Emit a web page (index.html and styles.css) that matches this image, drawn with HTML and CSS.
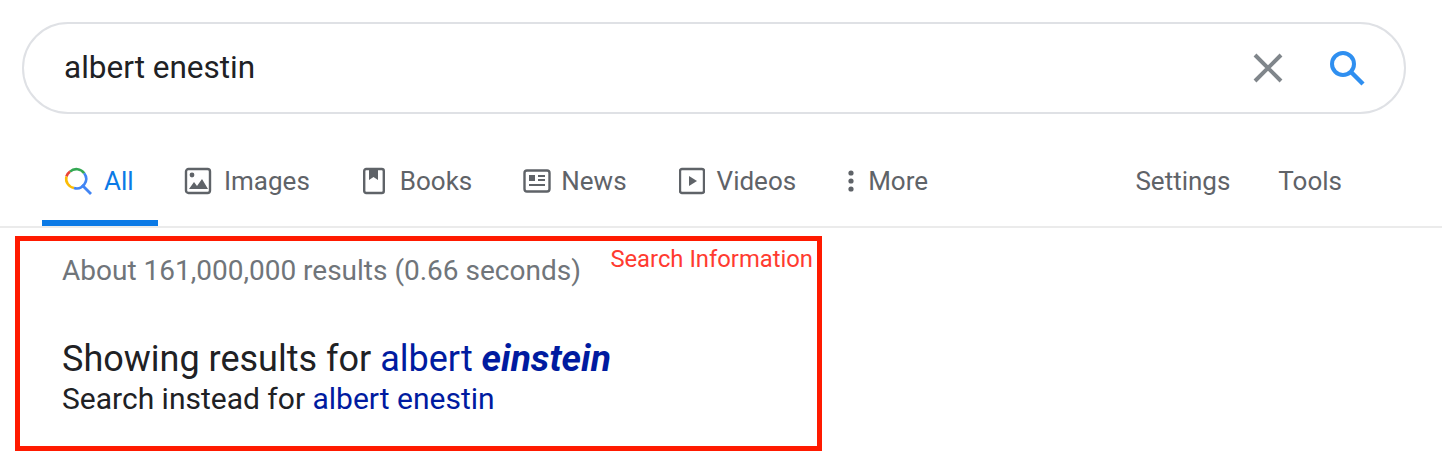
FILE: index.html
```html
<!DOCTYPE html>
<html lang="en">
<head>
    <meta charset="UTF-8">
    <title>albert enestin - Search</title>
    <link rel="stylesheet" href="styles.css">
</head>
<body>

    <!-- Search box -->
    <div class="search-box">
        <span class="search-query">albert enestin</span>
        <svg class="clear-icon" viewBox="0 0 30 30" width="30" height="30">
            <path d="M2 2 L28 28 M28 2 L2 28" stroke="#80868b" stroke-width="4" fill="none"/>
        </svg>
        <svg class="search-icon" viewBox="0 0 36 36" width="36" height="36">
            <circle cx="14" cy="14" r="11" stroke="#2f8ff0" stroke-width="4" fill="none"/>
            <path d="M22 22 L34 34" stroke="#2f8ff0" stroke-width="4.4" fill="none"/>
        </svg>
    </div>

    <!-- Tabs -->
    <div class="tabs">
        <a class="tab tab-active">
            <svg class="tab-icon" viewBox="0 0 28 28" width="28" height="28">
                <path d="M20.2 6.2 A9.5 9.5 0 0 0 6 4.6" stroke="#34a853" stroke-width="2.6" fill="none"/>
                <path d="M6 4.6 A9.5 9.5 0 0 0 2.4 9.5" stroke="#ea4335" stroke-width="2.6" fill="none"/>
                <path d="M2.4 9.5 A9.5 9.5 0 0 0 10 21" stroke="#fbbc05" stroke-width="2.6" fill="none"/>
                <path d="M10 21 A9.5 9.5 0 0 0 20.2 6.2" stroke="#4285f4" stroke-width="2.6" fill="none"/>
                <path d="M18 18 L27 27" stroke="#4285f4" stroke-width="2.8" fill="none"/>
            </svg>
            All
        </a>
        <a class="tab tab-images">
            <svg class="tab-icon" viewBox="0 0 28 28" width="28" height="28">
                <rect x="2" y="2" width="24" height="24" rx="2.5" stroke="#5f6368" stroke-width="2.4" fill="none"/>
                <circle cx="8" cy="8" r="2.4" fill="#5f6368"/>
                <path d="M5 22 L10 15 L13 19 L18 12 L24 22 Z" fill="#5f6368"/>
            </svg>
            Images
        </a>
        <a class="tab tab-books">
            <svg class="tab-icon" viewBox="0 0 22 28" width="22" height="28">
                <rect x="1.2" y="2" width="19.6" height="24" rx="2" stroke="#5f6368" stroke-width="2.4" fill="none"/>
                <path d="M6 2 H15 V13 L10.5 10 L6 13 Z" fill="#5f6368"/>
            </svg>
            Books
        </a>
        <a class="tab tab-news">
            <svg class="tab-icon" viewBox="0 0 28 24" width="28" height="24">
                <rect x="1.5" y="1.5" width="25" height="21" rx="2.5" stroke="#5f6368" stroke-width="2.4" fill="none"/>
                <path d="M6 6 H12 V12 H6 Z M15 6 H22 V8 H15 Z M15 10 H22 V12 H15 Z M6 15 H22 V17 H6 Z" fill="#5f6368"/>
            </svg>
            News
        </a>
        <a class="tab tab-videos">
            <svg class="tab-icon" viewBox="0 0 26 28" width="26" height="28">
                <rect x="1" y="2" width="24" height="24" rx="2" stroke="#5f6368" stroke-width="2.4" fill="none"/>
                <path d="M10 9 L18 14 L10 19 Z" fill="#5f6368"/>
            </svg>
            Videos
        </a>
        <a class="tab tab-more">
            <svg class="tab-icon" viewBox="0 0 8 24" width="8" height="24">
                <circle cx="4" cy="4" r="2.6" fill="#5f6368"/>
                <circle cx="4" cy="12" r="2.6" fill="#5f6368"/>
                <circle cx="4" cy="20" r="2.6" fill="#5f6368"/>
            </svg>
            More
        </a>
        <div class="tabs-right">
            <a class="tab">Settings</a>
            <a class="tab">Tools</a>
        </div>
    </div>

    <!-- Annotated results info -->
    <div class="info-box">
        <span class="info-label">Search Information</span>
        <div class="result-stats">About 161,000,000 results (0.66 seconds)</div>
        <div class="showing">Showing results for <a class="link">albert <b><i>einstein</i></b></a></div>
        <div class="instead">Search instead for <a class="link">albert enestin</a></div>
    </div>

</body>
</html>
```

FILE: styles.css
```css
/* Global */
body, html {
    margin: 0;
    padding: 0;
    background-color: #fff;
    font-family: Roboto, "Liberation Sans", sans-serif;
    overflow: hidden;
}

/* Search box */
.search-box {
    display: flex;
    align-items: center;
    box-sizing: border-box;
    width: 1384px;
    height: 92px;
    margin: 22px 0 0 22px;
    padding: 0 39px 0 40px;
    border: 2px solid #dfe1e5;
    border-radius: 46px;
}

.search-query {
    flex: 1;
    font-size: 31.5px;
    color: #202124;
    padding-bottom: 2px;
}

.clear-icon {
    margin-right: 46px;
}

/* Tabs */
.tabs {
    display: flex;
    align-items: center;
    box-sizing: border-box;
    height: 114px;
    padding: 0 100px 0 42px;
    border-bottom: 2px solid #ebebeb;
    font-size: 26px;
    color: #5f6368;
}

.tab {
    display: flex;
    align-items: center;
    gap: 12px;
    height: 112px;
    margin-right: 52px;
    box-sizing: border-box;
    padding-top: 22px;
}

.tab-active {
    width: 116px;
    margin-right: 26px;
    padding-left: 22px;
    padding-top: 28px;
    color: #0b7ae6;
    border-bottom: 6px solid #0b7ae6;
}

.tab-images {
    margin-right: 53px;
}

.tab-books {
    gap: 15px;
    margin-right: 51px;
}

.tab-news {
    gap: 10px;
}

.tab-videos {
    gap: 12px;
    margin-right: 51px;
}

.tab-more {
    gap: 13px;
    margin-right: 0;
}

.tabs-right {
    display: flex;
    margin-left: auto;
}

.tabs-right .tab {
    margin-right: 0;
    margin-left: 48px;
}

/* Annotated results info */
.info-box {
    position: relative;
    box-sizing: border-box;
    width: 807px;
    height: 215px;
    margin: 8px 0 0 15px;
    padding: 14px 0 0 42px;
    border: 5px solid #ff1a00;
}

.info-label {
    position: absolute;
    top: 4px;
    right: 4px;
    font-size: 23.8px;
    color: #ff3b30;
}

.result-stats {
    font-size: 28px;
    line-height: 32px;
    color: #70757a;
}

.showing {
    margin-top: 51px;
    font-size: 36px;
    line-height: 40px;
    color: #202124;
}

.showing b {
    font-size: 37.2px;
}

.instead {
    font-size: 30px;
    line-height: 39px;
    color: #202124;
}

.link {
    color: #001ba0;
}
```
